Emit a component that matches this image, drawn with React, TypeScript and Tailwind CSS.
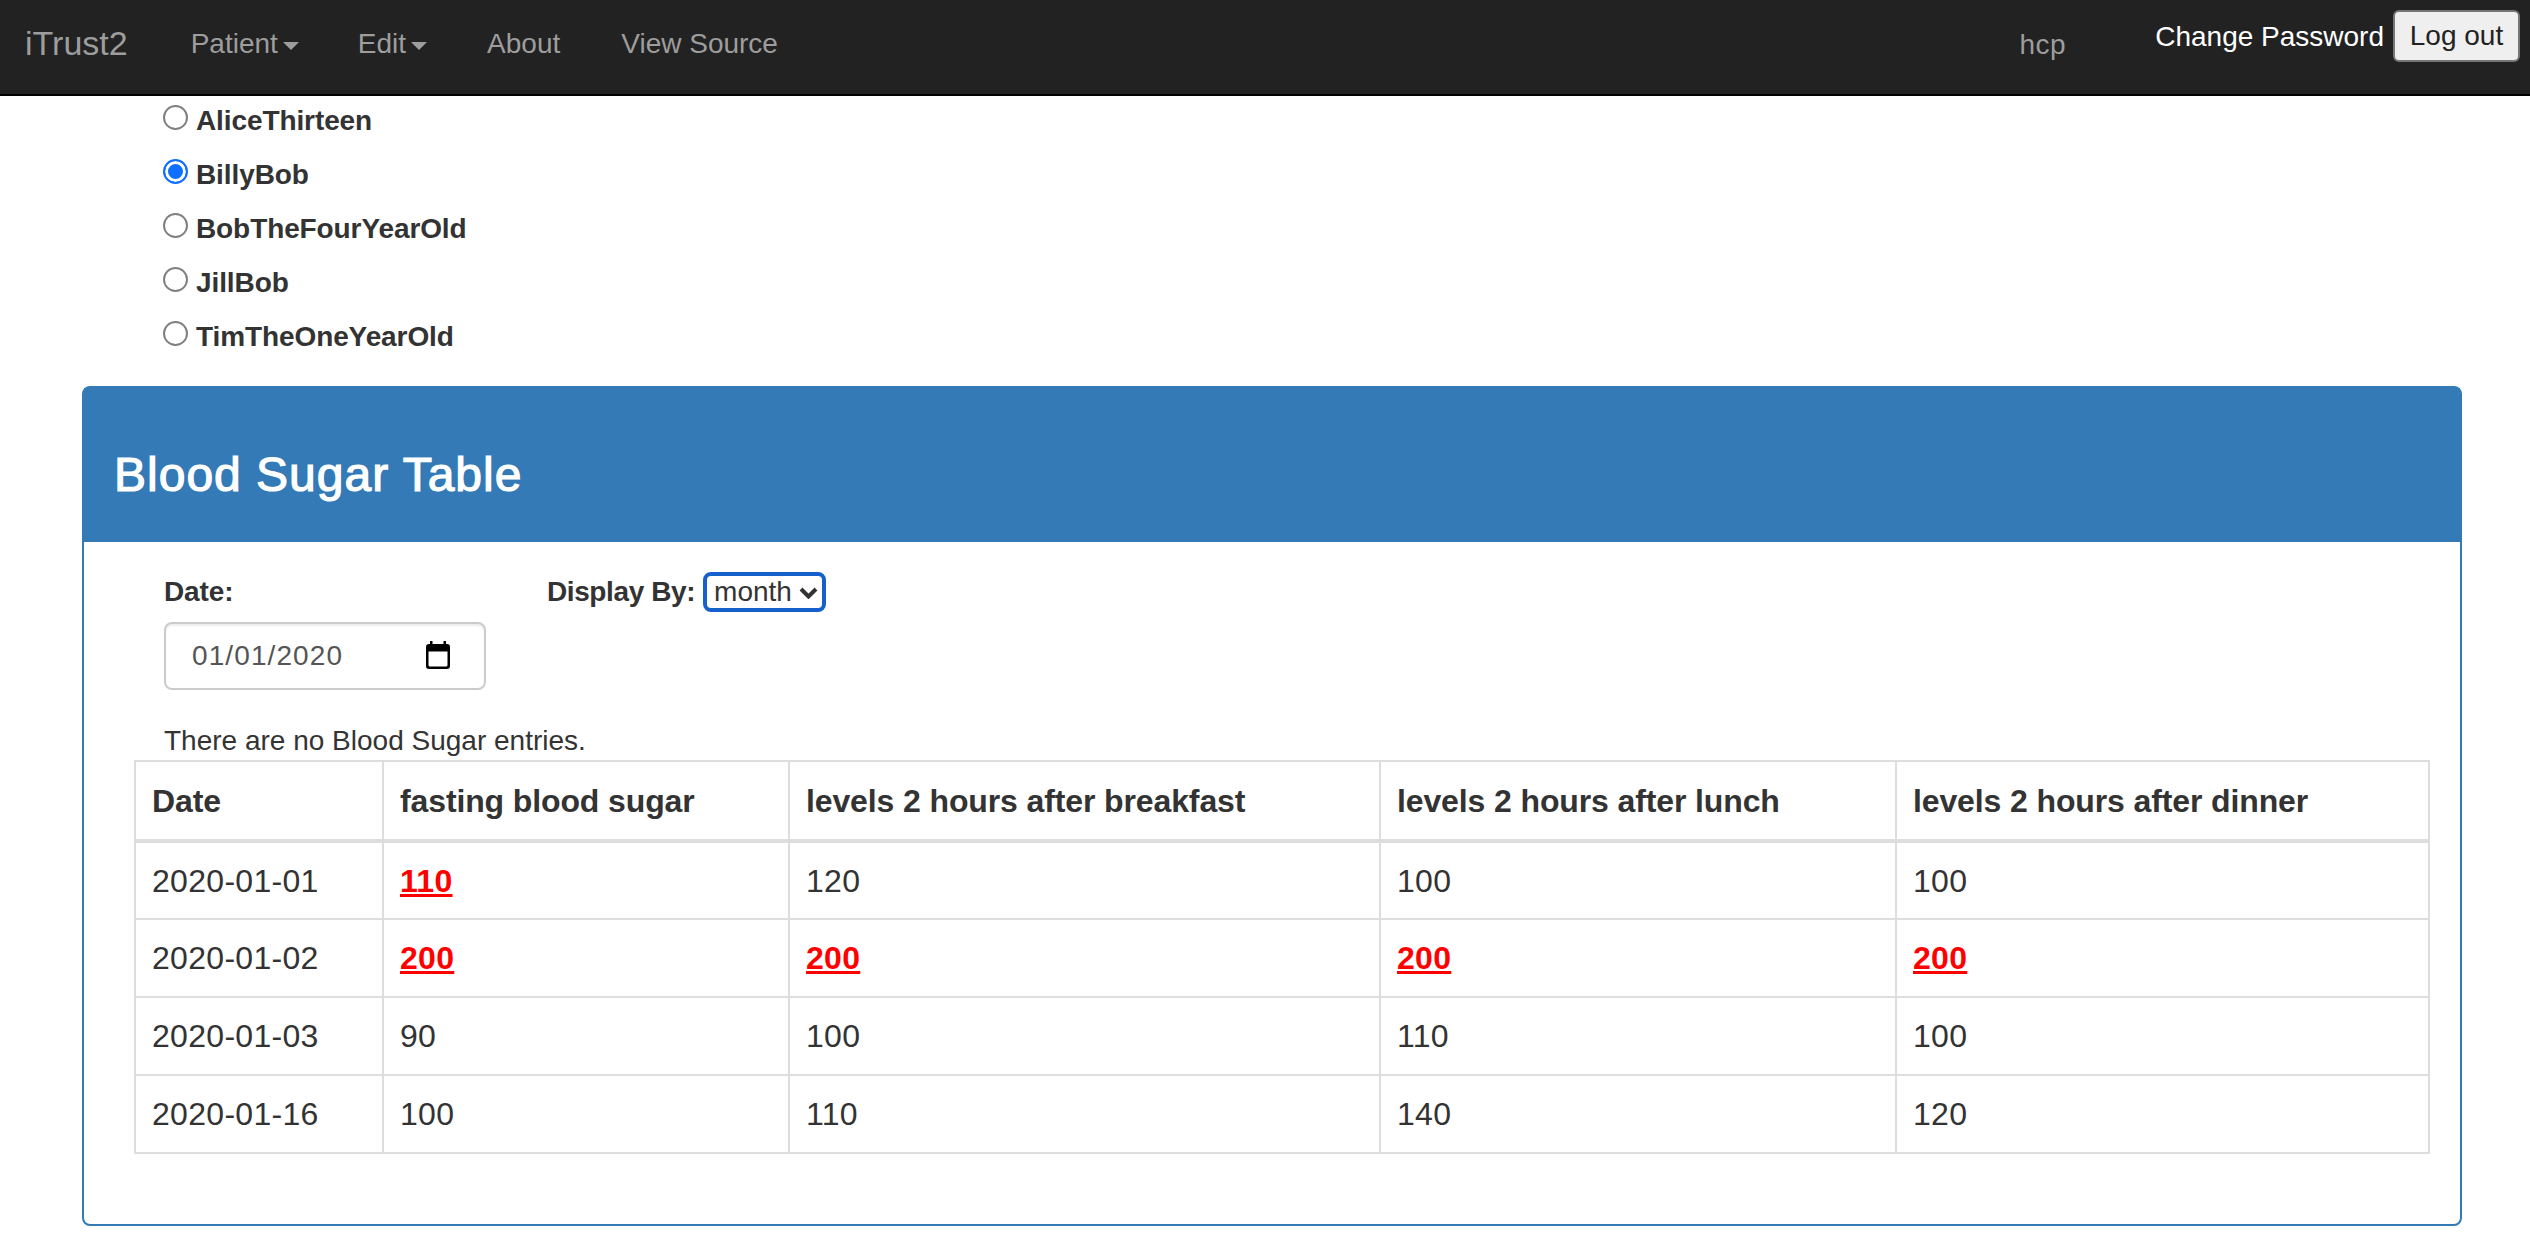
import React from "react";

const patients = ["AliceThirteen", "BillyBob", "BobTheFourYearOld", "JillBob", "TimTheOneYearOld"];

const rows = [
  { date: "2020-01-01", fasting: 110, breakfast: 120, lunch: 100, dinner: 100 },
  { date: "2020-01-02", fasting: 200, breakfast: 200, lunch: 200, dinner: 200 },
  { date: "2020-01-03", fasting: 90, breakfast: 100, lunch: 110, dinner: 100 },
  { date: "2020-01-16", fasting: 100, breakfast: 110, lunch: 140, dinner: 120 },
];

const Caret = () => (
  <span className="ml-[5px] inline-block border-x-[8px] border-t-[8px] border-x-transparent border-t-[#9d9d9d] align-middle" />
);

const CalendarIcon = () => (
  <svg viewBox="0 0 24 28" className="-mt-[2px] h-[28px] w-[24px] fill-black">
    <path
      fillRule="evenodd"
      d="M4 0h2.5v3h11V0H20v3h1a3 3 0 0 1 3 3v19a3 3 0 0 1-3 3H3a3 3 0 0 1-3-3V6a3 3 0 0 1 3-3h1zM2.5 10.5V24A1.5 1.5 0 0 0 4 25.5h16a1.5 1.5 0 0 0 1.5-1.5V10.5z"
    />
  </svg>
);

const Level = ({ value, high }: { value: number; high: number }) =>
  value > high ? <span className="font-bold text-[#ff0000] underline">{value}</span> : <span>{value}</span>;

const App: React.FC = () => {
  return (
    <div className="min-h-[1244px] bg-white font-['Liberation_Sans',Arial,sans-serif] text-[28px] text-[#333333]">
      <nav className="flex h-[96px] border-b-2 border-black bg-[#222222] text-[#9d9d9d]">
        <a className="ml-[25px] mt-[23px] text-[34px] leading-[40px]">iTrust2</a>
        <div className="ml-[63px] mt-[24px] flex gap-[60px] leading-[40px]">
          <a className="-mr-[1px]">Patient<Caret /></a>
          <a>Edit<Caret /></a>
          <a>About</a>
          <a className="ml-[1px]">View Source</a>
        </div>
        <div className="ml-auto mt-[25px] leading-[40px] tracking-[0.5px]">hcp</div>
        <div className="ml-[89px] mt-[17px] leading-[40px] text-white">Change Password</div>
        <button className="ml-[9px] mr-[10px] mt-[10px] h-[52px] w-[127px] rounded-[6px] border-2 border-[#767676] bg-[#efefef] text-[#222222]">
          Log out
        </button>
      </nav>

      <div className="flex flex-col gap-[6px] pl-[163px]">
        {patients.map((name) => (
          <label key={name} className="flex h-[48px] items-center pt-[1px] font-bold tracking-[-0.1px]">
            <input
              type="radio"
              name="patient"
              defaultChecked={name === "BillyBob"}
              className="-mt-[6px] mr-[8px] h-[25px] w-[25px] appearance-none rounded-full border-2 border-[#808080] bg-white checked:border-[#0f6fff] checked:bg-[#0f6fff] checked:shadow-[inset_0_0_0_3px_white]"
            />
            {name}
          </label>
        ))}
      </div>

      <section className="ml-[82px] mr-[68px] mt-[26px] rounded-[8px] border-2 border-[#337ab7]">
        <header className="flex h-[154px] items-center bg-[#337ab7] pl-[30px] pt-[20px] text-[48px] tracking-[1px] text-white [-webkit-text-stroke:1.2px_white]">
          Blood Sugar Table
        </header>
        <div className="pb-[70px] pl-[50px] pr-[31px] pt-[30px]">
          <div className="ml-[30px] flex">
            <div className="w-[383px]">
              <div className="h-[40px] font-bold leading-[40px] tracking-[-0.1px]">Date:</div>
              <div className="mt-[10px] flex h-[68px] w-[322px] items-center justify-between rounded-[8px] border-2 border-[#cccccc] pl-[26px] pr-[34px] shadow-[inset_0_2px_2px_rgba(0,0,0,0.08)]">
                <span className="tracking-[1.1px] text-[#555555]">01/01/2020</span>
                <CalendarIcon />
              </div>
            </div>
            <div className="flex h-[40px] items-center font-bold tracking-[-0.4px]">
              Display By:
              <div className="relative ml-[8px]">
                <select
                  defaultValue="month"
                  className="block h-[40px] w-[123px] appearance-none rounded-[8px] border-4 border-[#1560cc] bg-white pl-[7px] font-normal leading-[32px] tracking-normal text-[#333333]"
                >
                  <option>month</option>
                  <option>week</option>
                </select>
                <svg viewBox="0 0 19 12" className="pointer-events-none absolute right-[8px] top-[15px] h-[12px] w-[19px] fill-none stroke-[#333333] stroke-[4]">
                  <path d="M2 2l7.5 7.5L17 2" />
                </svg>
              </div>
            </div>
          </div>
          <p className="ml-[30px] mt-[30px] pt-[1px] leading-[39px]">There are no Blood Sugar entries.</p>
          <table className="w-[2296px] table-fixed border-collapse text-[32px]">
            <thead>
              <tr className="h-[80px] border-b-4 border-[#dddddd] text-left tracking-[-0.12px]">
                <th className="w-[248px] border-2 border-b-4 border-[#dddddd] px-[16px]">Date</th>
                <th className="w-[406px] border-2 border-b-4 border-[#dddddd] px-[16px]">fasting blood sugar</th>
                <th className="w-[591px] border-2 border-b-4 border-[#dddddd] px-[16px]">levels 2 hours after breakfast</th>
                <th className="w-[516px] border-2 border-b-4 border-[#dddddd] px-[16px]">levels 2 hours after lunch</th>
                <th className="border-2 border-b-4 border-[#dddddd] px-[16px]">levels 2 hours after dinner</th>
              </tr>
            </thead>
            <tbody>
              {rows.map((row) => (
                <tr key={row.date} className="h-[78px] tracking-[0.3px]">
                  <td className="border-2 border-[#dddddd] px-[16px]">{row.date}</td>
                  <td className="border-2 border-[#dddddd] px-[16px]"><Level value={row.fasting} high={100} /></td>
                  <td className="border-2 border-[#dddddd] px-[16px]"><Level value={row.breakfast} high={140} /></td>
                  <td className="border-2 border-[#dddddd] px-[16px]"><Level value={row.lunch} high={140} /></td>
                  <td className="border-2 border-[#dddddd] px-[16px]"><Level value={row.dinner} high={140} /></td>
                </tr>
              ))}
            </tbody>
          </table>
        </div>
      </section>
    </div>
  );
};

export default App;
